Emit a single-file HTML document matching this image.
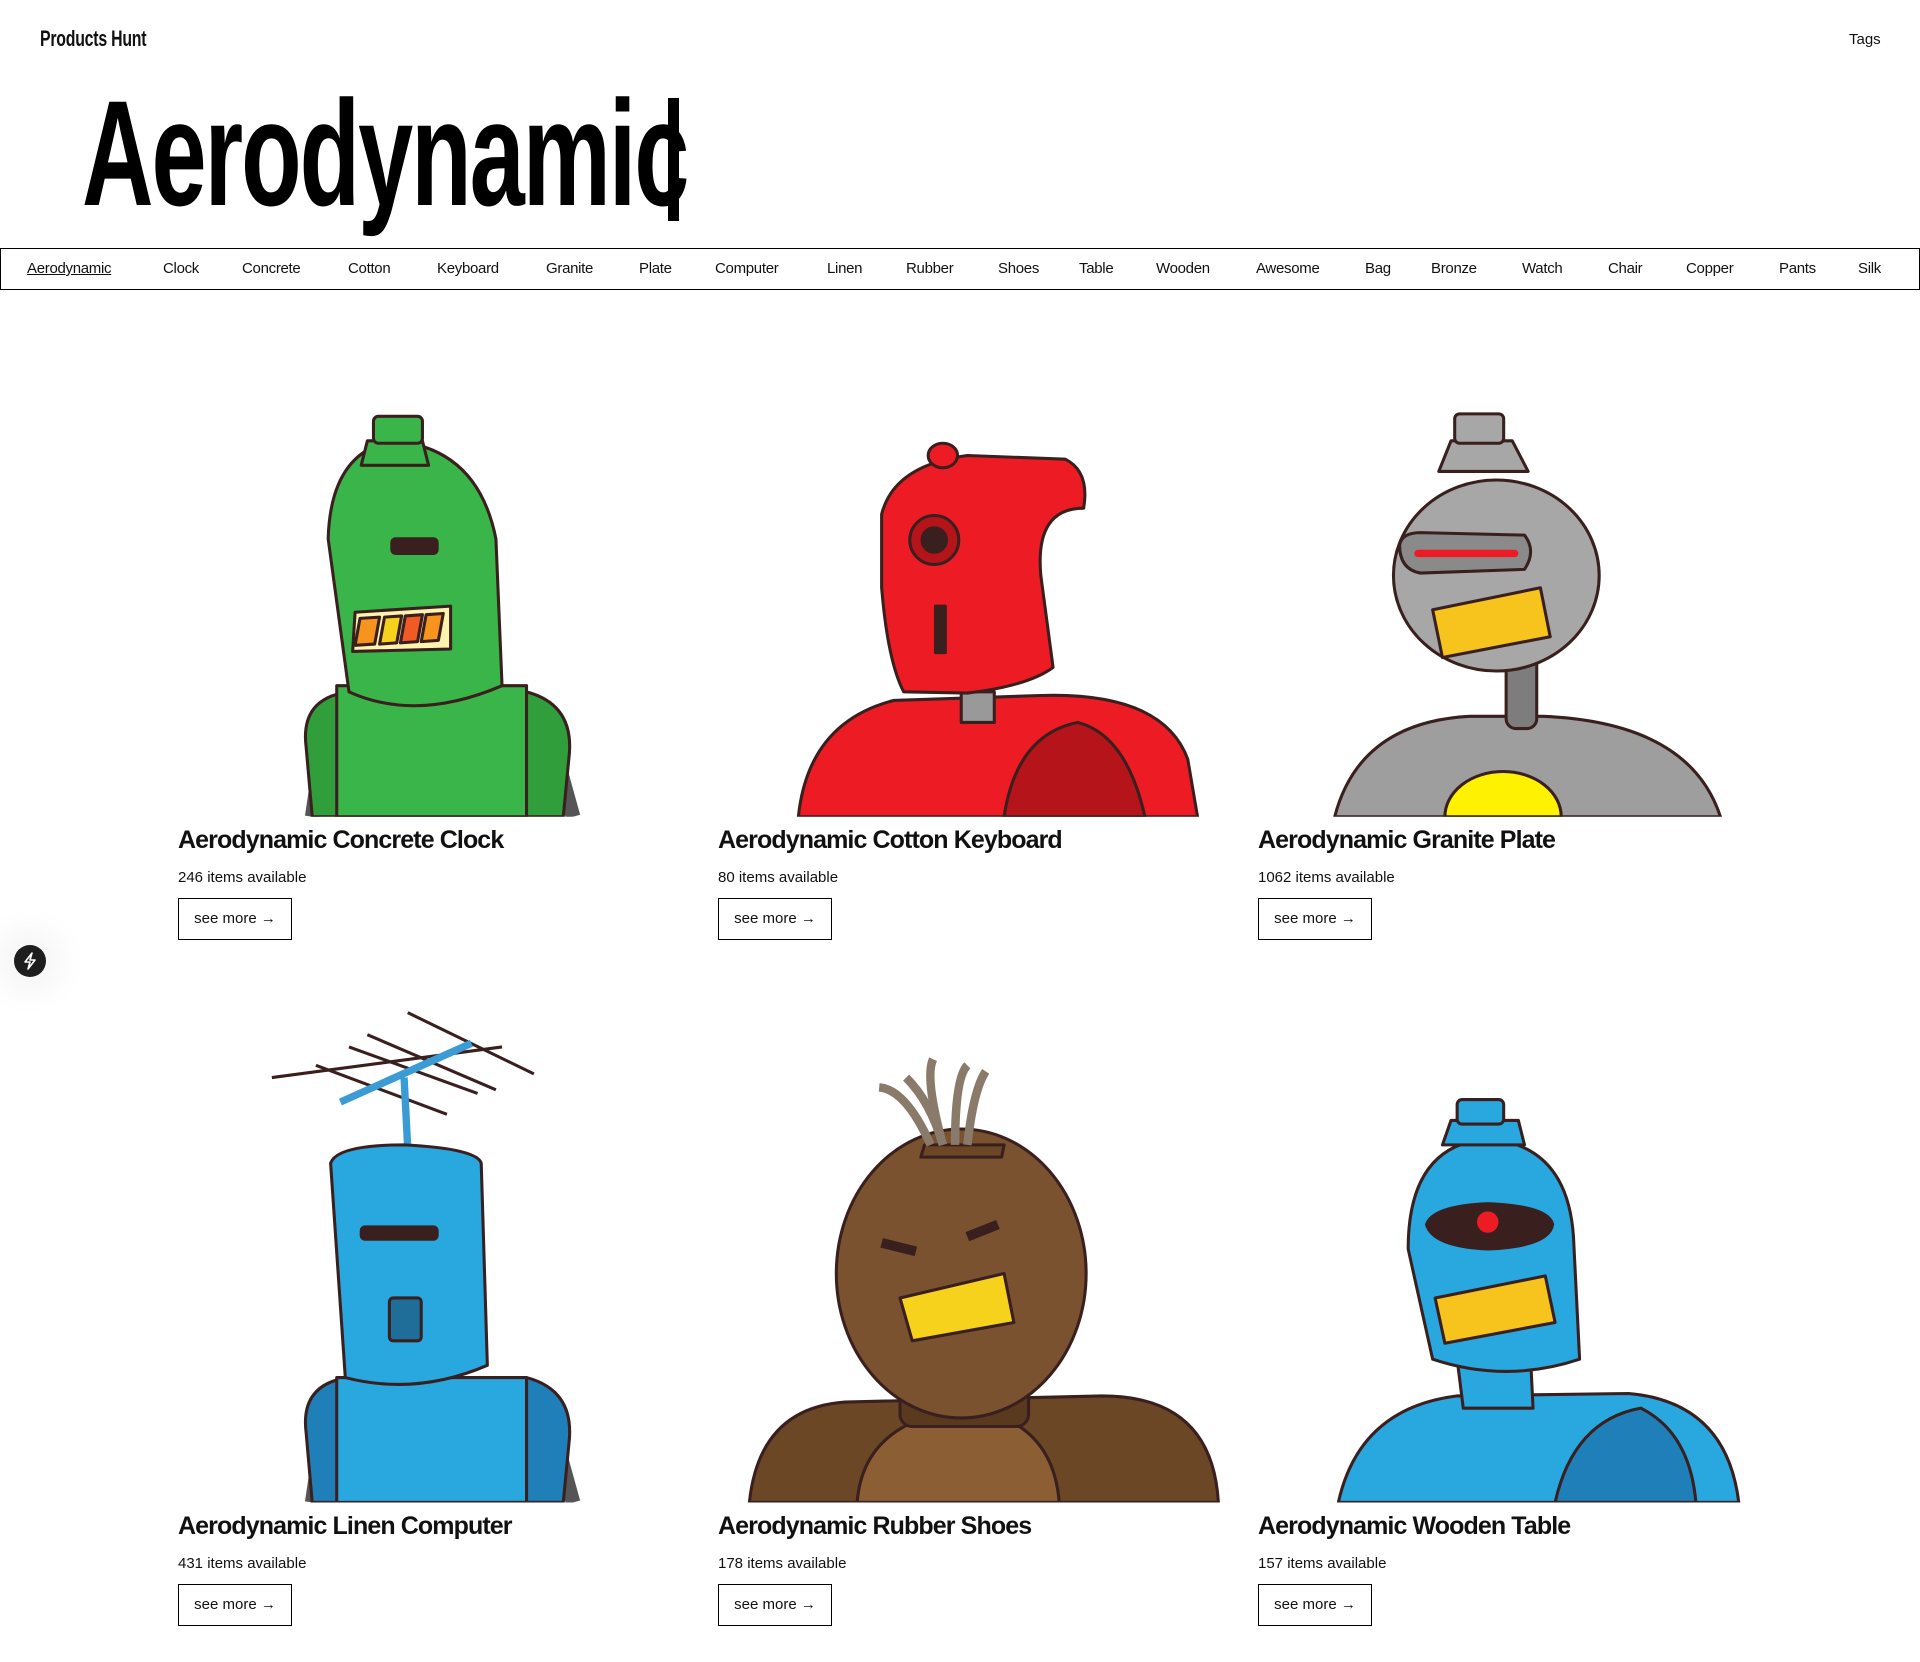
<!DOCTYPE html>
<html><head><meta charset="utf-8"><style>
*{margin:0;padding:0;box-sizing:border-box}
body{width:1920px;height:1662px;background:#fff;position:relative;overflow:hidden;font-family:"Liberation Sans",sans-serif;color:#111}
.logo{position:absolute;left:40px;top:26px;font-weight:bold;font-size:22px;transform:scaleX(.72);transform-origin:left top;letter-spacing:-.3px}
.tags{position:absolute;left:1849px;top:31px;font-size:15px}
.hero{position:absolute;left:82px;top:68px;font-size:150px;line-height:170px;font-weight:bold;transform:scaleX(.66);transform-origin:left top;letter-spacing:-3px;white-space:nowrap;color:#000}
.cursor{position:absolute;left:668px;top:98px;width:11px;height:123px;background:#000}
.nav{position:absolute;left:0;top:248px;width:1920px;height:42px;border:1.5px solid #000}
.nav span{position:absolute;top:11px;font-size:15px;letter-spacing:-.3px;white-space:nowrap}
.nav span.a{text-decoration:underline}
.t{position:absolute;font-size:25px;font-weight:bold;letter-spacing:-.9px;white-space:nowrap}
.n{position:absolute;font-size:15px;white-space:nowrap}
.b{position:absolute;width:114px;height:42px;border:1.5px solid #000;font-size:15px;line-height:39px;text-align:center}
.fab{position:absolute;left:14px;top:945px;width:32px;height:32px;border-radius:50%;background:#1e1e1e;box-shadow:0 0 30px 18px rgba(0,0,0,.04)}
svg.art{position:absolute;left:0;top:0}
</style></head><body>
<svg class="art" width="1920" height="1662" viewBox="0 0 1568 1357.3" stroke="#3a1f1f" stroke-width="2.5" stroke-linejoin="round">
<defs><clipPath id="c1"><rect x="0" y="0" width="1568" height="667"/></clipPath><clipPath id="c2"><rect x="0" y="700" width="1568" height="527"/></clipPath></defs>
<g clip-path="url(#c1)">
<path d="M262 620 L255 667 M455 620 L468 667" stroke="#555" stroke-width="12"/>
<path d="M250 610 Q245 570 285 565 L430 565 Q468 575 465 615 L460 667 L255 667 Z" fill="#2f9e3b"/>
<path d="M275 560 L275 667 L430 667 L430 560 Z" fill="#39b54a"/>
<path d="M268 440 Q270 370 320 360 Q390 365 405 440 L410 560 Q340 590 285 565 Z" fill="#39b54a"/>
<path d="M295 380 L300 360 L345 360 L350 380 Z" fill="#39b54a"/>
<rect x="305" y="340" width="40" height="22" rx="4" fill="#39b54a"/>
<rect x="320" y="440" width="37" height="12" rx="3" fill="#3a1f1f"/>
<path d="M290 500 L368 495 L368 530 L288 532 Z" fill="#fff3b0"/>
<path d="M294 505 L310 504 L306 526 L290 527Z" fill="#f7941d"/><path d="M314 504 L328 503 L324 525 L310 526Z" fill="#f7d21d"/><path d="M331 503 L345 502 L341 524 L327 525Z" fill="#f15a24"/><path d="M348 502 L362 501 L358 523 L344 524Z" fill="#f7941d"/>
<path d="M652 667 Q660 590 730 572 L850 568 Q950 565 970 620 L978 667 Z" fill="#ed1c24"/>
<path d="M820 667 Q830 600 880 590 Q920 600 935 667 Z" fill="#b5141b"/>
<rect x="785" y="565" width="27" height="25" fill="#999"/>
<path d="M720 420 Q730 380 790 372 L870 375 Q890 385 885 415 Q845 415 850 470 L860 545 Q840 560 790 566 L738 565 Q725 540 720 480 Z" fill="#ed1c24"/>
<circle cx="763" cy="441" r="20" fill="#b5141b"/><circle cx="763" cy="441" r="10" fill="#3a1f1f"/>
<rect x="764" y="495" width="8" height="38" fill="#3a1f1f"/>
<ellipse cx="770" cy="372" rx="12" ry="10" fill="#ed1c24"/>
<path d="M1090 667 Q1110 590 1200 585 L1260 585 Q1380 590 1405 667 Z" fill="#9e9e9e"/>
<path d="M1180 667 A45 35 0 0 1 1275 667 Z" fill="#fff200"/>
<rect x="1230" y="535" width="25" height="60" rx="8" fill="#7d7d7d"/>
<ellipse cx="1222" cy="470" rx="84" ry="78" fill="#a7a7a7"/>
<path d="M1143 445 Q1145 435 1160 435 L1245 437 Q1255 450 1245 465 L1160 468 Q1143 465 1143 445Z" fill="#8a8a8a"/>
<rect x="1155" y="449" width="85" height="6" rx="3" fill="#ed1c24" stroke="none"/>
<path d="M1170 498 L1258 480 L1266 520 L1178 537 Z" fill="#f7c41d"/>
<path d="M1185 360 L1235 360 L1248 385 L1175 385 Z" fill="#a7a7a7"/>
<rect x="1188" y="338" width="40" height="24" rx="4" fill="#a7a7a7"/>
</g>
<g clip-path="url(#c2)">
<path d="M222 880 L410 855 M258 870 L365 910 M285 855 L390 893 M333 827 L436 877 M300 845 L405 890" stroke="#3a1f1f" stroke-width="2.5"/>
<path d="M278 900 L385 852 M330 880 L333 938" stroke="#3a9bd5" stroke-width="6"/>
<path d="M262 1180 L255 1227 M455 1180 L468 1227" stroke="#555" stroke-width="12"/>
<path d="M250 1170 Q245 1130 285 1125 L430 1125 Q468 1135 465 1175 L460 1227 L255 1227 Z" fill="#1f7fb8"/>
<rect x="275" y="1125" width="155" height="102" fill="#29a8e0"/>
<path d="M270 950 Q275 935 330 935 Q390 938 393 950 L398 1115 Q340 1140 282 1125 Z" fill="#29a8e0"/>
<rect x="295" y="1002" width="62" height="10" rx="3" fill="#3a1f1f"/>
<rect x="318" y="1060" width="26" height="35" rx="3" fill="#1f6d99"/>
<path d="M612 1227 Q620 1150 690 1145 L900 1140 Q990 1140 995 1227 Z" fill="#6b4726"/>
<path d="M700 1227 Q705 1160 790 1150 Q860 1160 865 1227 Z" fill="#8b5e34"/>
<rect x="735" y="1125" width="105" height="40" rx="10" fill="#5a3a1e"/>
<ellipse cx="785" cy="1040" rx="102" ry="118" fill="#7a5230"/>
<path d="M735 1060 L820 1040 L828 1080 L745 1095 Z" fill="#f7d21d"/>
<path d="M720 1015 L748 1022 M790 1010 L815 1000" stroke-width="8"/>
<path d="M752 945 L755 935 L820 935 L818 945 Z" fill="#6b4726"/>
<path d="M760 935 Q740 890 718 888 M770 935 Q755 880 762 865 M780 935 Q780 880 790 870 M790 935 Q795 890 805 875 M770 935 Q760 900 740 880" stroke="#8a7a6a" stroke-width="7" fill="none"/>
<path d="M1093 1227 Q1110 1150 1190 1140 L1330 1138 Q1410 1145 1420 1227 Z" fill="#29a8e0"/>
<path d="M1270 1227 Q1285 1160 1340 1150 Q1380 1170 1385 1227 Z" fill="#1f7fb8"/>
<path d="M1190 1110 L1250 1110 L1252 1150 L1195 1150 Z" fill="#29a8e0"/>
<path d="M1150 1020 Q1150 935 1215 930 Q1280 935 1285 1010 L1290 1110 Q1230 1130 1170 1110 Z" fill="#29a8e0"/>
<path d="M1165 1000 Q1170 985 1215 983 Q1265 985 1268 1000 Q1265 1018 1215 1020 Q1170 1018 1165 1000Z" fill="#3a1f1f"/>
<circle cx="1215" cy="998" r="10" fill="#ed1c24"/>
<path d="M1172 1060 L1262 1042 L1270 1080 L1180 1097 Z" fill="#f7c41d"/>
<path d="M1178 935 L1245 935 L1240 915 L1185 915 Z" fill="#29a8e0"/>
<rect x="1190" y="898" width="38" height="20" rx="4" fill="#29a8e0"/>
</g>
</svg>
<div class="logo">Products Hunt</div>
<div class="tags">Tags</div>
<div class="hero">Aerodynamic</div>
<div class="cursor"></div>
<div class="nav">
<span class="a" style="left:26px">Aerodynamic</span><span style="left:162px">Clock</span><span style="left:241px">Concrete</span><span style="left:347px">Cotton</span><span style="left:436px">Keyboard</span><span style="left:545px">Granite</span><span style="left:638px">Plate</span><span style="left:714px">Computer</span><span style="left:826px">Linen</span><span style="left:905px">Rubber</span><span style="left:997px">Shoes</span><span style="left:1078px">Table</span><span style="left:1155px">Wooden</span><span style="left:1255px">Awesome</span><span style="left:1364px">Bag</span><span style="left:1430px">Bronze</span><span style="left:1521px">Watch</span><span style="left:1607px">Chair</span><span style="left:1685px">Copper</span><span style="left:1778px">Pants</span><span style="left:1857px">Silk</span>
</div>
<div class="t" style="left:178px;top:826px">Aerodynamic Concrete Clock</div>
<div class="n" style="left:178px;top:869px">246 items available</div>
<div class="b" style="left:178px;top:898px">see more →</div>
<div class="t" style="left:718px;top:826px">Aerodynamic Cotton Keyboard</div>
<div class="n" style="left:718px;top:869px">80 items available</div>
<div class="b" style="left:718px;top:898px">see more →</div>
<div class="t" style="left:1258px;top:826px">Aerodynamic Granite Plate</div>
<div class="n" style="left:1258px;top:869px">1062 items available</div>
<div class="b" style="left:1258px;top:898px">see more →</div>
<div class="t" style="left:178px;top:1512px">Aerodynamic Linen Computer</div>
<div class="n" style="left:178px;top:1555px">431 items available</div>
<div class="b" style="left:178px;top:1584px">see more →</div>
<div class="t" style="left:718px;top:1512px">Aerodynamic Rubber Shoes</div>
<div class="n" style="left:718px;top:1555px">178 items available</div>
<div class="b" style="left:718px;top:1584px">see more →</div>
<div class="t" style="left:1258px;top:1512px">Aerodynamic Wooden Table</div>
<div class="n" style="left:1258px;top:1555px">157 items available</div>
<div class="b" style="left:1258px;top:1584px">see more →</div>
<div class="fab"><svg width="32" height="32" viewBox="0 0 32 32"><path d="M18 8 L11 17 L16 17 L14 24 L21 15 L16 15 Z" fill="none" stroke="#fff" stroke-width="1.6" stroke-linejoin="round"/></svg></div>
</body></html>
